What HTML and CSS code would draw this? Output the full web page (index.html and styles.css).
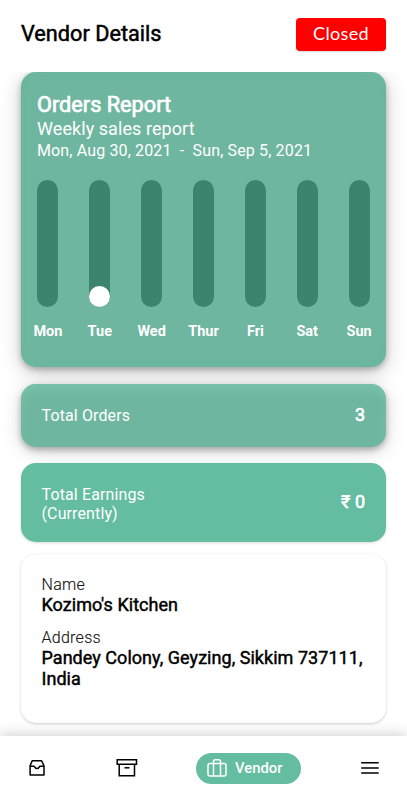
FILE: index.html
```html
<!DOCTYPE html>
<html lang="en">
<head>
<meta charset="utf-8">
<title>Vendor Details</title>
<link rel="stylesheet" href="styles.css">
</head>
<body>
<div class="app">
  <header class="header">
    <h1 class="title"><span>Vendor Details</span></h1>
    <button class="status"><span>Closed</span></button>
  </header>
  <main class="content">
    <section class="card report">
      <h2 class="report-title"><span>Orders Report</span></h2>
      <p class="report-sub"><span>Weekly sales report</span></p>
      <p class="report-range"><span>Mon, Aug 30, 2021 &nbsp;-&nbsp; Sun, Sep 5, 2021</span></p>
      <div class="chart">
        <div class="day"><div class="track"></div><span>Mon</span></div>
        <div class="day"><div class="track"><div class="fill"></div></div><span>Tue</span></div>
        <div class="day"><div class="track"></div><span>Wed</span></div>
        <div class="day"><div class="track"></div><span>Thur</span></div>
        <div class="day"><div class="track"></div><span>Fri</span></div>
        <div class="day"><div class="track"></div><span>Sat</span></div>
        <div class="day"><div class="track"></div><span>Sun</span></div>
      </div>
    </section>
    <section class="card stat orders">
      <span class="stat-label">Total Orders</span>
      <span class="stat-value">3</span>
    </section>
    <section class="card stat earnings">
      <span class="stat-label">Total Earnings<br>(Currently)</span>
      <span class="stat-value">₹ 0</span>
    </section>
    <section class="info">
      <p class="info-label"><span>Name</span></p>
      <p class="info-value name"><span>Kozimo's Kitchen</span></p>
      <p class="info-label"><span>Address</span></p>
      <p class="info-value"><span>Pandey Colony, Geyzing, Sikkim 737111,<br>India</span></p>
    </section>
  </main>
  <nav class="nav">
    <svg class="icon-inbox" width="18" height="18" viewBox="0 0 18 18" fill="none" stroke="#000" stroke-width="1.5" stroke-linejoin="round"><path d="M4.200 1.800h9.400l2.400 5v9.300H2.100V6.800z"/><path d="M2.100 7.300h3.800c.9 0 1 2.300 3.100 2.300s2.200-2.300 3.100-2.300h3.900"/></svg>
    <svg class="icon-box" width="22" height="20" viewBox="0 0 22 20" fill="none" stroke="#000" stroke-width="1.5"><path d="M1.200 1.700h19.300v4.600H1.200z"/><path d="M3.200 6.300v11.500h15.300V6.300"/><path d="M8.500 9.800h5"/></svg>
    <a class="tab">
      <svg width="20" height="20" viewBox="0 0 20 20" fill="none" stroke="#fff" stroke-width="1.500"><rect x="1" y="5.400" width="18" height="12.600" rx="2"/><path d="M6.500 18V3.500q0-1.800 1.800-1.800h3.400q1.800 0 1.800 1.800V18"/></svg>
      <span>Vendor</span>
    </a>
    <svg class="icon-menu" width="18" height="14" viewBox="0 0 18 14" stroke="#000" stroke-width="1.500"><path d="M.2 1.800h17.500M.2 6.900h17.500M.2 12h17.500"/></svg>
  </nav>
</div>
</body>
</html>
```
FILE: styles.css
```css
* { box-sizing: border-box; }
body { margin: 0; background: #fff; font-family: Roboto, sans-serif; color: #000; }
h1, h2, p { margin: 0; font-weight: 400; white-space: nowrap; }
.app { height: 800px; display: flex; flex-direction: column; overflow: hidden; }
.header { height: 72px; flex: none; padding: 18px 21px 0; display: flex; justify-content: space-between; align-items: flex-start; }
.title { font-size: 21.7px; line-height: 32px; -webkit-text-stroke: .5px #000; }
.status { width: 90px; height: 33px; padding: 0 0 3px; border: 0; border-radius: 4px; background: #fe0000; color: #fff; font: 400 18px/30px Lato, sans-serif; letter-spacing: .35px; box-shadow: 0 1px 2px rgba(0,0,0,.16); }
.content { flex: 1; min-height: 0; overflow: hidden; padding: 0 21px; display: flex; flex-direction: column; }
.card { flex: none; border-radius: 15px; color: #fff; background: #64bda1; }
.report { height: 295px; padding: 20px 11px 0 16px; background: #6fb6a0; box-shadow: 0 3px 6px rgba(0,0,0,.26), 0 5px 22px rgba(0,0,0,.2), inset 0 0 12px rgba(90,189,157,.35); }
.report-title { font-size: 21.7px; line-height: 25px; -webkit-text-stroke: .7px #fff; }
.report-sub { font-size: 18px; line-height: 23px; letter-spacing: .07px; }
.report-range { font-size: 16px; line-height: 21px; letter-spacing: .14px; }
.chart { display: flex; gap: 10px; margin: 19px -5px 0 -10px; }
.day { width: 42px; display: flex; flex-direction: column; align-items: center; font-size: 14.5px; font-weight: 700; line-height: 18px; gap: 16px; }
.track { width: 21px; height: 127px; border-radius: 11px; background: #3c846d; display: flex; align-items: flex-end; }
.fill { width: 21px; height: 21px; border-radius: 50%; background: #fff; }
.stat { display: flex; align-items: center; justify-content: space-between; padding: 0 21px 0 20.5px; font-size: 16px; line-height: 19px; }
.stat-label { letter-spacing: .12px; }
.stat-value { font-size: 18px; margin-bottom: 2px; -webkit-text-stroke: .6px #fff; }
.orders { height: 63px; margin-top: 17px; background: #6fb6a0; box-shadow: 0 3px 6px rgba(0,0,0,.28), 0 4px 20px rgba(0,0,0,.16), inset 0 6px 10px rgba(130,205,180,.5); }
.earnings { height: 79px; margin-top: 16px; padding-top: 3px; box-shadow: 0 1px 3px rgba(0,0,0,.15); position: relative; }
.earnings .stat-value { margin-bottom: 5px; }
.info { flex: none; height: 169px; margin-top: 12px; padding: 22px 20px 0 20.5px; border-radius: 15px; background: #fff; box-shadow: 0 1px 3px rgba(0,0,0,.2); }
.info-label { font-size: 16px; line-height: 18px; color: #111; font-weight: 300; letter-spacing: .27px; -webkit-text-stroke: .15px #222; }
.info-value { font-size: 18px; line-height: 21.500px; letter-spacing: .04px; -webkit-text-stroke: .45px #000; }
.name { margin-bottom: 13px; }
.nav { flex: none; height: 64px; background: #fff; display: flex; align-items: center; padding: 0 28px; box-shadow: 0 -2px 12px rgba(0,0,0,.18); position: relative; }
.icon-box { margin-left: 70px; }
.tab { width: 105px; height: 31px; margin-left: 58px; padding-left: 11px; border-radius: 16px; background: #64bda1; color: #fff; display: flex; align-items: center; gap: 8px; font-size: 14.8px; font-weight: 500; }
.icon-menu { margin-left: 60px; }
```
